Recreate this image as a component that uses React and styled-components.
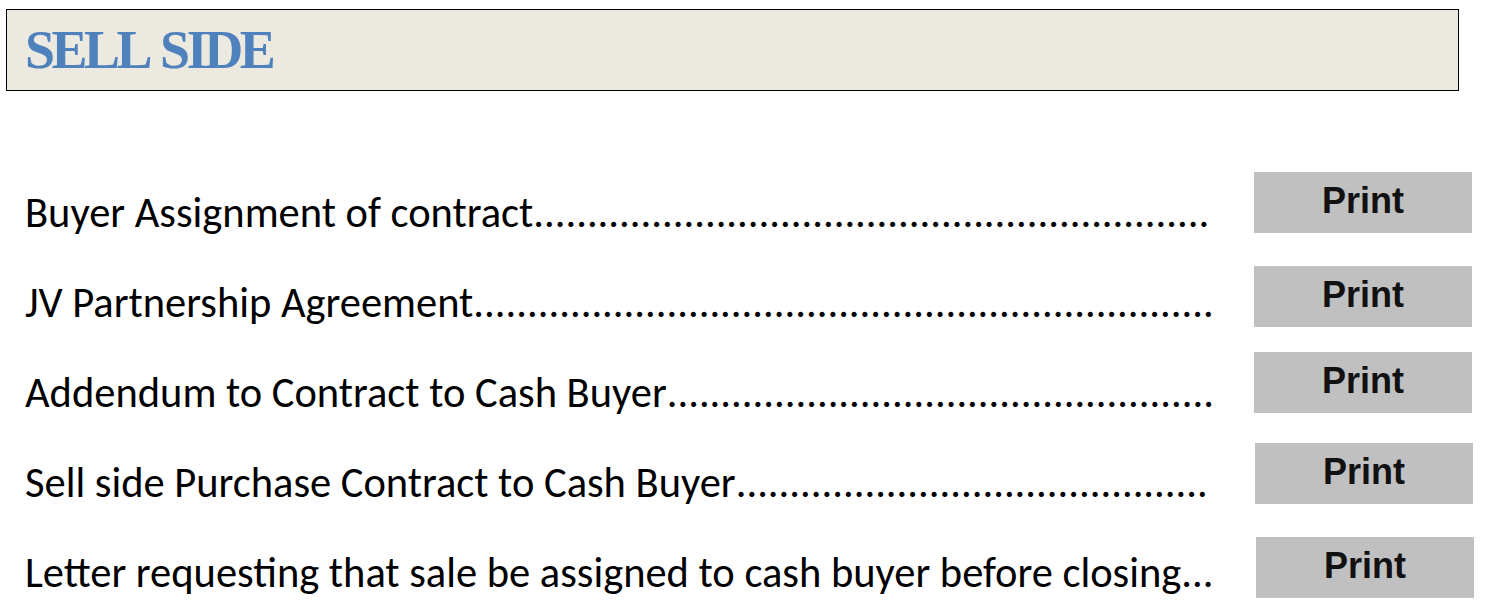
import styled, { createGlobalStyle } from "styled-components"

const GlobalStyle = createGlobalStyle`
body {
  margin: 0;
  background: #ffffff;
}
`

const Page = styled.div`
width: 1485px;
height: 608px;
overflow: hidden;
padding: 9px 0 0 6px;
box-sizing: border-box;
`

const Header = styled.div`
width: 1453px;
height: 82px;
box-sizing: border-box;
border: 1px solid #000;
background: #eceae0;
display: flex;
align-items: center;
padding-left: 18px;
`

const Title = styled.h1`
margin: 0;
font-family: "Liberation Serif", serif;
font-weight: bold;
font-size: 54px;
letter-spacing: -3.5px;
word-spacing: 4px;
color: #4f81bd;
line-height: 1;
`

const List = styled.div`
margin-top: 81px;
margin-left: -6px;
display: flex;
flex-direction: column;
`

const Row = styled.div`
display: flex;
align-items: flex-start;
height: 90px;
`

const Label = styled.div`
display: flex;
width: 1190px;
margin: 16px 0 0 25px;
font-family: Carlito, Lato, "Liberation Sans", sans-serif;
font-size: 42.5px;
line-height: 50px;
color: #000;
`

const Name = styled.span`
white-space: nowrap;
`

const Leader = styled.span`
white-space: nowrap;
`

const PrintButton = styled.div`
width: 218px;
height: 61px;
margin: ${p => p.$dy}px 0 0 ${p => 39 + p.$dx}px;
background: #c0c0c0;
display: flex;
justify-content: center;
padding-top: 9px;
box-sizing: border-box;
font-family: "Liberation Sans", Arial, sans-serif;
font-weight: bold;
font-size: 36px;
line-height: 40px;
color: #111;
`

const docs = [
  { name: "Buyer Assignment of contract", dots: 63, dy: 0, dx: 0 },
  { name: "JV Partnership Agreement", dots: 69, dy: 4, dx: 0 },
  { name: "Addendum to Contract to Cash Buyer", dots: 51, dy: 0, dx: 0 },
  { name: "Sell side Purchase Contract to Cash Buyer", dots: 44, dy: 1, dx: 1 },
  { name: "Letter requesting that sale be assigned to cash buyer before closing...", dots: 0, dy: 5, dx: 2 },
]

const App = () => {
  return (
    <Page>
      <GlobalStyle />
      <Header>
        <Title>SELL SIDE</Title>
      </Header>

      <List>
        {docs.map(d => (
          <Row key={d.name}>
            <Label>
              <Name>{d.name}</Name>
              {d.dots > 0 && <Leader>{".".repeat(d.dots)}</Leader>}
            </Label>
            <PrintButton $dy={d.dy} $dx={d.dx}>Print</PrintButton>
          </Row>
        ))}
      </List>
    </Page>
  )
}

export default App
